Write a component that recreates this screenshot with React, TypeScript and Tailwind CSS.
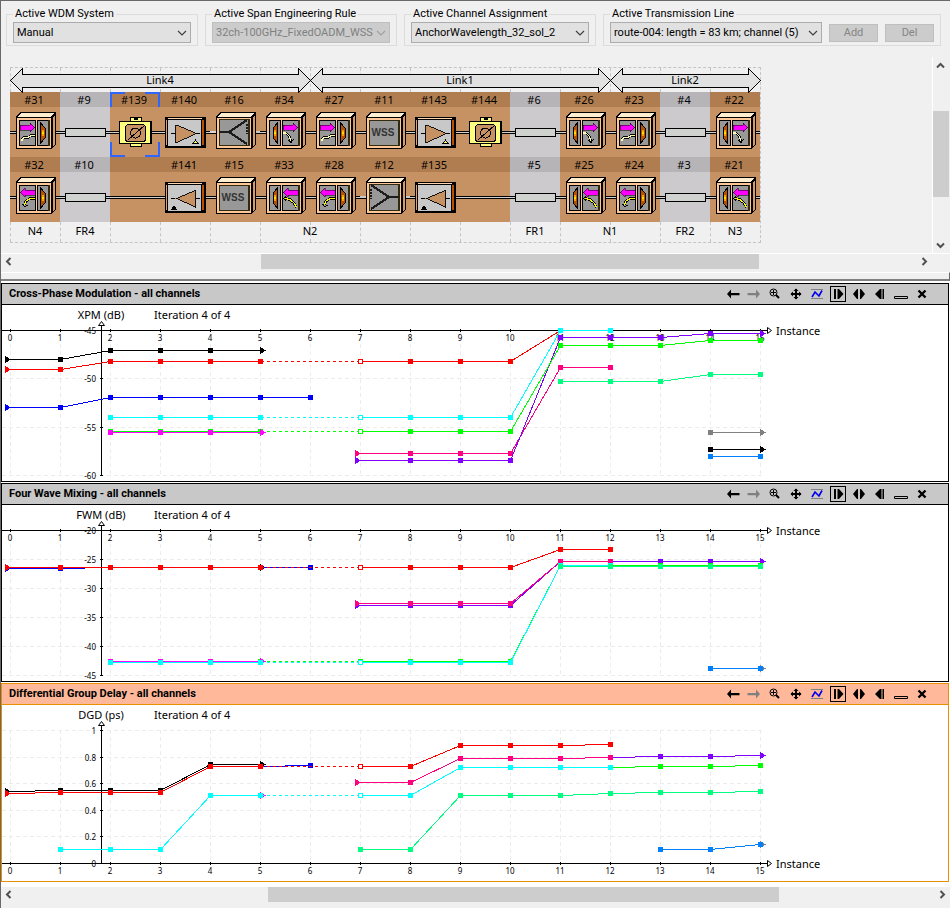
import type { ReactNode } from 'react'

type IconKind = 'coupler' | 'wss' | 'splitter' | 'amp' | 'filter' | 'fiber' | 'none'

interface NetCell {
  id?: string
  kind: IconKind
  grey?: boolean
  flip?: boolean
  side?: 'left' | 'right'
  selected?: boolean
}

interface Series {
  color: string
  start: number
  values: number[]
  startCap?: 'flag'
  endCap?: 'arrow'
  // index of the hollow marker after a dashed jump
  gap?: { from: number; to: number }
}

const topRow: NetCell[] = [
  { id: '#31', kind: 'coupler', side: 'right' },
  { id: '#9', kind: 'fiber', grey: true },
  { id: '#139', kind: 'filter', selected: true },
  { id: '#140', kind: 'amp' },
  { id: '#16', kind: 'splitter' },
  { id: '#34', kind: 'coupler', side: 'left' },
  { id: '#27', kind: 'coupler', side: 'right' },
  { id: '#11', kind: 'wss' },
  { id: '#143', kind: 'amp' },
  { id: '#144', kind: 'filter' },
  { id: '#6', kind: 'fiber', grey: true },
  { id: '#26', kind: 'coupler', side: 'left' },
  { id: '#23', kind: 'coupler', side: 'right' },
  { id: '#4', kind: 'fiber', grey: true },
  { id: '#22', kind: 'coupler', side: 'left' },
]

const bottomRow: NetCell[] = [
  { id: '#32', kind: 'coupler', side: 'right', flip: true },
  { id: '#10', kind: 'fiber', grey: true },
  { kind: 'none' },
  { id: '#141', kind: 'amp', flip: true },
  { id: '#15', kind: 'wss' },
  { id: '#33', kind: 'coupler', side: 'left', flip: true },
  { id: '#28', kind: 'coupler', side: 'right', flip: true },
  { id: '#12', kind: 'splitter', flip: true },
  { id: '#135', kind: 'amp', flip: true },
  { kind: 'none' },
  { id: '#5', kind: 'fiber', grey: true },
  { id: '#25', kind: 'coupler', side: 'left', flip: true },
  { id: '#24', kind: 'coupler', side: 'right', flip: true },
  { id: '#3', kind: 'fiber', grey: true },
  { id: '#21', kind: 'coupler', side: 'left', flip: true },
]

const links = [
  { name: 'Link4', span: 6 },
  { name: 'Link1', span: 6 },
  { name: 'Link2', span: 3 },
]

const sites = [
  { name: 'N4', span: 1 },
  { name: 'FR4', span: 1 },
  { name: 'N2', span: 8 },
  { name: 'FR1', span: 1 },
  { name: 'N1', span: 2 },
  { name: 'FR2', span: 1 },
  { name: 'N3', span: 1 },
]

/* ---------- network icons, each on a 50x50 tile ---------- */

function Box({ children }: { children: ReactNode }) {
  return (
    <g>
      <path d="M6 10 L10 5 H46 V37 L42 42 H6 Z" fill="#000" />
      <path d="M8 10 L11 6 H44 L41 10 Z" fill="#ffedd0" />
      <path d="M43 11 L45 8 V37 L43 40 Z" fill="#d99a64" />
      <rect x="6.5" y="10.5" width="35" height="31" fill="#ffc896" stroke="#000" />
      {children}
    </g>
  )
}

function Coupler({ side, flip }: { side?: 'left' | 'right'; flip?: boolean }) {
  const wideX = side === 'right' ? 9 : 22
  const narrowX = side === 'right' ? 27 : 9
  const curve =
    side === 'right'
      ? flip
        ? 'M25 26.5 H20 L16 29 L14.5 33'
        : 'M12 34 V32 L14 30.5 H18 L21 28.5 H25'
      : flip
        ? 'M25 26.5 L30 27.5 L34 31 L36.5 35'
        : 'M22.5 26 H26 L29 29 L31 34'
  const head =
    side === 'right'
      ? flip
        ? 'M12.5 32 L15 35 L17.5 33'
        : ''
      : flip
        ? 'M26 24.5 L23.5 26.5 L26 29'
        : 'M28 33 L31 35.5 L34 32'
  return (
    <Box>
      <rect x={wideX + 0.5} y="13.5" width="16" height="25" fill="#989898" stroke="#000" />
      <rect x={narrowX + 0.5} y="13.5" width="11" height="25" fill="#989898" stroke="#000" />
      <rect x="38" y="13" width="2" height="26" fill="#332b10" />
      {side === 'right' ? (
        <path d="M30.5 16 L35 21 V31 L30.5 36 Z" fill="#b85000" stroke="#000" />
      ) : (
        <path d="M17.5 16 L13 21 V31 L17.5 36 Z" fill="#b85000" stroke="#000" />
      )}
      <rect x={side === 'right' ? 32 : 14} y="23" width="2" height="6" fill="#ff9a00" />
      <rect x={side === 'right' ? 32 : 14} y="25" width="2" height="2" fill="#ffe000" />
      <path d={head} fill="none" stroke="#000" strokeWidth="1" />
      <path d={curve} fill="none" stroke="#000" strokeWidth="2.6" />
      <path d={curve} fill="none" stroke={flip ? '#ffff00' : '#ffffb0'} strokeWidth="1.2" />
      <g transform={`translate(${wideX} 0)`}>
        <path
          d={flip ? 'M16 18 H6 V16 L1 20.5 L6 25 V23 H16 Z' : 'M1 18 H11 V16 L16 20.5 L11 25 V23 H1 Z'}
          fill="#ff00ff"
          stroke="#000"
          strokeWidth="0.5"
        />
      </g>
    </Box>
  )
}

function Wss() {
  return (
    <Box>
      <rect x="9.5" y="13.5" width="30" height="25" fill="#989898" stroke="#332b10" />
      <rect x="38" y="13" width="2" height="26" fill="#332b10" />
      <text x="23" y="29" textAnchor="middle" fontSize="10" fontWeight="700" fill="#333" fontFamily="Liberation Sans, sans-serif">
        WSS
      </text>
    </Box>
  )
}

function Splitter({ flip }: { flip?: boolean }) {
  return (
    <g>
      <rect x="0" y="24" width="6" height="2" fill={flip ? '#c8c8c8' : '#d8d8d8'} />
      <rect x="44" y="24" width="6" height="2" fill="#c8c8c8" />
      <Box>
        <rect x="9.5" y="12.5" width="30" height="26" fill="#989898" stroke="#332b10" />
        <rect x="38" y="12" width="2" height="27" fill="#332b10" />
        <g transform={flip ? 'translate(48 0) scale(-1 1)' : undefined} stroke="#1c1c1c" fill="none">
          <path d="M9 25 H19 L37 13 M19 25 L37 37" strokeWidth="2" />
          <path d="M37 17 V27" strokeWidth="2" strokeDasharray="2 1" />
        </g>
      </Box>
    </g>
  )
}

function Amp({ flip }: { flip?: boolean }) {
  return (
    <g>
      <rect x="5" y="10" width="41" height="31" fill="#000" />
      <rect x="8" y="11" width="34" height="1" fill="#ffd5b0" />
      <rect x="42" y="13" width="2" height="25" fill="#b85000" />
      <rect x="6" y="13" width="1" height="25" fill="#e0a070" />
      <rect x="8" y="13" width="33" height="26" fill="#c8c8c8" />
      <path d="M11 26.5 H40" stroke="#000" />
      <path
        d={flip ? 'M35.5 18 V35.5 L15.5 26.5 Z' : 'M15.5 18 V35.5 L35.5 26.5 Z'}
        fill="#c69264"
        stroke="#000"
        strokeWidth="0.9"
      />
      {flip ? (
        <path d="M11 37.5 L14 33 L17 37.5 Z" fill="#000" />
      ) : (
        <path d="M33 36.5 L35.5 33 L38 36.5 Z" fill="#ffff60" stroke="#000" />
      )}
    </g>
  )
}

function Filter() {
  return (
    <g>
      <rect x="20.5" y="10.5" width="11" height="4" fill="#ffff80" stroke="#000" />
      <rect x="20.5" y="36.5" width="11" height="3" fill="#ffff80" stroke="#000" />
      <rect x="24" y="11" width="4" height="2" fill="#000" />
      <rect x="9" y="14" width="33" height="23" fill="#000" />
      <rect x="10" y="15" width="30" height="21" fill="#ffff80" />
      <rect x="15.5" y="17.5" width="20" height="17" rx="3" fill="#c69264" stroke="#000" />
      <circle cx="25.5" cy="26" r="5" fill="none" stroke="#000" />
      <path d="M18 33 L34 19" stroke="#000" />
    </g>
  )
}

function Fiber() {
  return <rect x="5.5" y="21.5" width="40" height="8" fill="#d0d2d0" stroke="#000" />
}

function CellIcon({ cell }: { cell: NetCell }) {
  return (
    <svg className="block size-[50px]" viewBox="0 0 50 50" shapeRendering="crispEdges">
      <rect x="0" y="24" width="50" height="3" fill="#000" />
      <rect x="0" y="25" width="50" height="1" fill="#d0d0d0" />
      {cell.kind === 'coupler' && <Coupler side={cell.side} flip={cell.flip} />}
      {cell.kind === 'wss' && <Wss />}
      {cell.kind === 'splitter' && <Splitter flip={cell.flip} />}
      {cell.kind === 'amp' && <Amp flip={cell.flip} />}
      {cell.kind === 'filter' && <Filter />}
      {cell.kind === 'fiber' && <Fiber />}
    </svg>
  )
}

function NetworkCell({ cell }: { cell: NetCell }) {
  return (
    <div className={`relative ${cell.grey ? 'bg-[#cccacd]' : 'bg-[#c69264]'}`}>
      <div
        className={`h-[15px] pr-0.5 text-center leading-[15px] ${cell.grey ? 'bg-[#b6b4b7]' : 'bg-[#b07d50]'}`}
      >
        {cell.id}
      </div>
      <CellIcon cell={cell} />
      {cell.selected && (
        <svg className="absolute inset-0 size-full" viewBox="0 0 50 65" fill="none" stroke="#2f66ff" strokeWidth="2">
          <path d="M1 15 V1 H15 M35 1 H49 V15 M49 50 V64 H35 M15 64 H1 V50" />
        </svg>
      )}
    </div>
  )
}

function LinkArrow({ name, span }: { name: string; span: number }) {
  const w = span * 50
  return (
    <svg
      className="row-start-1 block h-[25px]"
      style={{ gridColumn: `span ${span}`, width: w + 1 }}
      viewBox={`0 0 ${w + 1} 25`}
      shapeRendering="crispEdges"
    >
      <path
        d={`M0.5 12.5 L12.5 0.5 V6.5 H${w - 11.5} V0.5 L${w + 0.5} 12.5 L${w - 11.5} 24.5 V19.5 H12.5 V24.5 Z`}
        fill="#e1e1e1"
        stroke="#000"
      />
      <text x={w / 2} y="16" textAnchor="middle">
        {name}
      </text>
    </svg>
  )
}

function DashedCells({ height }: { height: string }) {
  return (
    <div className={`col-span-full col-start-1 row-start-1 grid grid-cols-[repeat(15,50px)] ${height}`}>
      {topRow.map((cell) => (
        <div key={cell.id} className="border-l border-dashed border-[#c4c4c4]" />
      ))}
    </div>
  )
}

function Network() {
  return (
    <div className="w-[751px] border-y border-r border-dashed border-[#c4c4c4]">
      <div className="grid grid-cols-[repeat(15,50px)]">
        <DashedCells height="h-6" />
        <div className="z-10 col-span-full col-start-1 row-start-1 grid h-6 grid-cols-[repeat(15,50px)]">
          {links.map((link) => (
            <LinkArrow key={link.name} {...link} />
          ))}
        </div>
      </div>
      {[topRow, bottomRow].map((row, i) => (
        <div key={i} className="grid grid-cols-[repeat(15,50px)]">
          {row.map((cell, j) => (
            <NetworkCell key={j} cell={cell} />
          ))}
        </div>
      ))}
      <div className="grid grid-cols-[repeat(15,50px)]">
        <DashedCells height="h-5" />
        <div className="col-span-full col-start-1 row-start-1 grid grid-cols-[repeat(15,50px)]">
          {sites.map((site) => (
            <span key={site.name} className="text-center leading-[18px]" style={{ gridColumn: `span ${site.span}` }}>
              {site.name}
            </span>
          ))}
        </div>
      </div>
    </div>
  )
}

/* ---------- charts ---------- */

const RED = '#ff0000'
const BLUE = '#0000ff'
const CYAN = '#00ffff'
const GREEN = '#00ff00'
const MAGENTA = '#ff00ff'
const PINK = '#ff0080'
const VIOLET = '#8000ff'
const SPRING = '#00ff80'
const AZURE = '#0080ff'
const GREY = '#808080'

const jump = { from: 5, to: 7 }
const rep = (v: number, n: number): number[] => Array(n).fill(v)

const xpm: Series[] = [
  { color: '#000', start: 0, values: [-48, -48, ...rep(-47.1, 4)], startCap: 'flag', endCap: 'arrow' },
  { color: BLUE, start: 0, values: [-53, -53, ...rep(-51.95, 5)], startCap: 'flag' },
  { color: RED, start: 0, values: [-49.05, -49.05, ...rep(-48.2, 4), NaN, ...rep(-48.2, 4), -45, -45], startCap: 'flag', gap: jump },
  { color: PINK, start: 7, values: [...rep(-57.75, 4), -48.85, -48.85], startCap: 'flag' },
  { color: VIOLET, start: 7, values: [...rep(-58.45, 4), ...rep(-45.75, 3), -45.3, -45.3], startCap: 'flag', endCap: 'arrow' },
  { color: GREEN, start: 2, values: [...rep(-55.45, 4), NaN, ...rep(-55.45, 4), ...rep(-46.55, 3), -46.05, -46.05], gap: jump },
  { color: MAGENTA, start: 2, values: rep(-55.6, 4), endCap: 'arrow' },
  { color: CYAN, start: 2, values: [...rep(-54, 4), NaN, ...rep(-54, 4), -45, -45], gap: jump },
  { color: SPRING, start: 11, values: [...rep(-50.3, 3), -49.55, -49.55] },
  { color: GREY, start: 14, values: rep(-55.6, 2), endCap: 'arrow' },
  { color: '#000', start: 14, values: rep(-57.3, 2), endCap: 'arrow' },
  { color: AZURE, start: 14, values: rep(-58.05, 2) },
]

const fwm: Series[] = [
  { color: '#000', start: 0, values: rep(-26.4, 6), startCap: 'flag', endCap: 'arrow' },
  { color: BLUE, start: 0, values: [-26.55, -26.55, ...rep(-26.4, 5)], startCap: 'flag' },
  { color: RED, start: 0, values: [...rep(-26.4, 6), NaN, ...rep(-26.4, 4), -23.3, -23.3], startCap: 'flag', gap: jump },
  { color: VIOLET, start: 7, values: [...rep(-32.9, 4), ...rep(-25.4, 5)], startCap: 'flag', endCap: 'arrow' },
  { color: PINK, start: 7, values: [...rep(-32.6, 4), -25.4, -25.4], startCap: 'flag' },
  { color: GREEN, start: 2, values: [...rep(-42.6, 4), NaN, ...rep(-42.6, 4), ...rep(-26, 5)], gap: jump },
  { color: MAGENTA, start: 2, values: rep(-42.55, 4), endCap: 'arrow' },
  { color: CYAN, start: 2, values: [...rep(-42.75, 4), NaN, ...rep(-42.75, 4), -26, -26], gap: jump },
  { color: SPRING, start: 11, values: rep(-26.2, 5) },
  { color: GREY, start: 14, values: rep(-43.8, 2), endCap: 'arrow' },
  { color: AZURE, start: 14, values: rep(-43.8, 2) },
]

const dgd: Series[] = [
  { color: '#000', start: 0, values: [0.54, ...rep(0.55, 3), 0.742, 0.742], startCap: 'flag', endCap: 'arrow' },
  { color: BLUE, start: 5, values: [0.727, 0.734] },
  { color: RED, start: 0, values: [0.527, ...rep(0.534, 3), 0.727, 0.727, NaN, 0.727, 0.727, ...rep(0.886, 3), 0.893], startCap: 'flag', gap: jump },
  { color: VIOLET, start: 7, values: [0.607, 0.607, ...rep(0.787, 3), 0.795, 0.802, 0.802, 0.81], startCap: 'flag', endCap: 'arrow' },
  { color: PINK, start: 7, values: [0.607, 0.607, ...rep(0.787, 3), 0.795], startCap: 'flag' },
  { color: GREEN, start: 12, values: [0.722, 0.728, 0.728, 0.735] },
  { color: MAGENTA, start: 4, values: [0.51, 0.51], endCap: 'arrow' },
  { color: CYAN, start: 1, values: [...rep(0.105, 3), 0.51, 0.51, NaN, 0.51, 0.51, ...rep(0.722, 4)], gap: jump },
  { color: SPRING, start: 7, values: [0.105, 0.105, ...rep(0.51, 3), 0.524, 0.532, 0.532, 0.539] },
  { color: GREY, start: 14, values: [0.105, 0.143], endCap: 'arrow' },
  { color: AZURE, start: 13, values: [0.105, 0.105, 0.143] },
]

interface ChartProps {
  unit: string
  ticks: number[]
  top: number
  bottom: number
  bottomY: number
  axisY: number
  series: Series[]
}

const px = (i: number) => 8 + i * 50

function Chart({ unit, ticks, top, bottom, bottomY, axisY, series }: ChartProps) {
  const py = (v: number) => Math.round(25 + ((top - v) / (top - bottom)) * (bottomY - 25))
  const instances = Array.from({ length: 16 }, (_, i) => i)

  return (
    <svg className="block h-[176px] w-full bg-white" shapeRendering="crispEdges">
      <g stroke="#ececec" strokeDasharray="4 3">
        {instances.map((i) => (
          <path key={i} d={`M${px(i) + 0.5} 25 V${bottomY}`} />
        ))}
        {ticks.map((t) => (
          <path key={t} d={`M0 ${py(t) + 0.5} H763`} />
        ))}
      </g>
      <g stroke="#000" fill="none">
        <path d={`M0 ${axisY + 0.5} H765`} />
        <path d={`M99.5 20 V${bottomY + 1}`} />
        {instances.map((i) => (
          <path key={i} d={`M${px(i) + 0.5} ${axisY - 1} V${axisY + 2}`} />
        ))}
        {ticks.map((t) => (
          <path key={t} d={`M98 ${py(t) + 0.5} H101`} />
        ))}
        <g fill="#fff" shapeRendering="auto">
          <path d="M96.5 20.5 L99.5 16.5 L102.5 20.5 Z" />
          <path d={`M765.5 ${axisY - 2.5} V${axisY + 3.5} L769.5 ${axisY + 0.5} Z`} />
        </g>
      </g>
      <g fontSize="8">
        {instances.map((i) => (
          <text key={i} x={px(i)} y={axisY + 11} textAnchor="middle">
            {i}
          </text>
        ))}
        {ticks.map((t) => (
          <text key={t} x="94" y={py(t) + 4} textAnchor="end">
            {t}
          </text>
        ))}
      </g>
      <text x="99" y="14" textAnchor="middle">
        {unit}
      </text>
      <text x="152" y="14">
        Iteration 4 of 4
      </text>
      <text x="774" y={axisY + 5}>
        Instance
      </text>
      {series.map((s, k) => (
        <Line key={k} series={s} py={py} />
      ))}
    </svg>
  )
}

function Line({ series, py }: { series: Series; py: (v: number) => number }) {
  const { color, start, values, startCap, endCap, gap } = series
  const points = values
    .map((v, i) => ({ i: start + i, x: px(start + i), y: Number.isNaN(v) ? NaN : py(v) }))
    .filter((p) => !Number.isNaN(p.y))
  const last = points.length - 1

  return (
    <g stroke={color} fill={color}>
      {points.slice(1).map((p, n) => {
        const prev = points[n]
        const dashed = gap !== undefined && p.i === gap.to
        return (
          <path
            key={p.i}
            d={`M${prev.x + 0.5} ${prev.y + 0.5} L${p.x + 0.5} ${p.y + 0.5}`}
            strokeDasharray={dashed ? '3 3' : undefined}
            fill="none"
          />
        )
      })}
      {points.map((p, n) => {
        if (n === 0 && startCap)
          return <path key={p.i} stroke="none" d={`M${p.x - 5} ${p.y - 3} L${p.x + 1} ${p.y + 0.5} L${p.x - 5} ${p.y + 4} Z`} />
        if (n === last && endCap)
          return <path key={p.i} stroke="none" d={`M${p.x} ${p.y - 3} L${p.x + 6} ${p.y + 0.5} L${p.x} ${p.y + 4} Z`} />
        if (gap && p.i === gap.to)
          return <rect key={p.i} x={p.x - 1.5} y={p.y - 1.5} width="4" height="4" fill="#fff" />
        return <rect key={p.i} x={p.x - 2} y={p.y - 2} width="5" height="5" stroke="none" />
      })}
    </g>
  )
}

/* ---------- chart window ---------- */

const tools: { label: string; boxed?: boolean; icon: ReactNode }[] = [
  { label: 'Back', icon: <path d="M2 8 L6 3.5 V7 H14.5 V9.2 H6 V12.5 Z" /> },
  { label: 'Forward', icon: <path fill="#808080" d="M14 8 L10 3.5 V7 H1.5 V9.2 H10 V12.5 Z" /> },
  {
    label: 'Zoom',
    icon: (
      <g fill="none" stroke="#000">
        <circle cx="6.5" cy="6.5" r="3.5" />
        <path d="M6.5 4 V9 M4 6.5 H9" />
        <path d="M9 9 L12 12" strokeWidth="2" />
      </g>
    ),
  },
  {
    label: 'Pan',
    icon: (
      <g>
        <path d="M7 3 H9 V13 H7 Z M3 7 H13 V9 H3 Z" />
        <path d="M8 2.5 L10.5 5 H5.5 Z M8 13.5 L10.5 11 H5.5 Z M2.5 8 L5 5.5 V10.5 Z M13.5 8 L11 5.5 V10.5 Z" />
      </g>
    ),
  },
  {
    label: 'Fit curves',
    icon: (
      <g fill="none">
        <path d="M2 3.5 H14 M2 12.5 H14" stroke="#808080" />
        <path d="M3 11 L6 6 L10 10 L13 4.5" stroke="#0000f0" strokeWidth="1.6" />
      </g>
    ),
  },
  { label: 'Expand right', boxed: true, icon: <path d="M4 3 H6 V13 H4 Z M7.5 3 H9 L13.5 8 L9 13 H7.5 Z" /> },
  { label: 'Expand both', icon: <path d="M2 8 L6 3 H7 V13 H6 Z M14 8 L10 3 H9 V13 H10 Z" /> },
  { label: 'Expand left', icon: <path d="M12 3 H10.5 V13 H12 Z M9.5 3 H8 L3 8 L8 13 H9.5 Z" /> },
  { label: 'Minimize', icon: <path d="M1.5 10.5 H14.5 V12.5 H1.5 Z" fill="none" stroke="#000" /> },
  { label: 'Close', icon: <path d="M4.5 4.5 L11.5 11.5 M11.5 4.5 L4.5 11.5" stroke="#000" strokeWidth="2.4" /> },
]

function ChartWindow({ title, active, children }: { title: string; active?: boolean; children: ReactNode }) {
  return (
    <section className={`border ${active ? 'border-[#e89000]' : 'border-black'}`}>
      <header
        className={`flex h-[21px] items-center justify-between border-b pr-4 pl-[7px] ${
          active ? 'border-[#e89000] bg-[#ffb899]' : 'border-black bg-[#c8c8c8]'
        }`}
      >
        <h2 className="font-['Roboto',sans-serif] font-bold">{title}</h2>
        <div className="flex">
          {tools.map((tool) => (
            <button key={tool.label} type="button" aria-label={tool.label} className="flex w-[21px] justify-center">
              <span className={`block size-4 ${tool.boxed ? 'outline outline-black -outline-offset-1' : ''}`}>
                <svg className="block size-4" viewBox="0 0 16 16">
                  {tool.icon}
                </svg>
              </span>
            </button>
          ))}
        </div>
      </header>
      {children}
    </section>
  )
}

/* ---------- scroll bars and form bits ---------- */

function Chevron({ rotate }: { rotate: string }) {
  return (
    <svg className={`size-[15px] ${rotate}`} viewBox="0 0 15 15" fill="none" stroke="#505050" strokeWidth="2">
      <path d="M4 9.5 L7.5 6 L11 9.5" />
    </svg>
  )
}

function HScroll({ before, thumb, after }: { before: number; thumb: number; after: number }) {
  return (
    <div className="flex h-[15px] items-stretch">
      <button type="button" aria-label="Scroll left">
        <Chevron rotate="-rotate-90" />
      </button>
      <div className="flex flex-1">
        <div style={{ flexGrow: before }} />
        <div className="bg-[#cdcdcd]" style={{ flexGrow: thumb }} />
        <div style={{ flexGrow: after }} />
      </div>
      <button type="button" aria-label="Scroll right">
        <Chevron rotate="rotate-90" />
      </button>
    </div>
  )
}

function Picker({ id, value, disabled, width }: { id: string; value: string; disabled?: boolean; width: string }) {
  return (
    <div className={`relative ${width}`}>
      <select
        id={id}
        disabled={disabled}
        defaultValue={value}
        className="block h-[21px] w-full appearance-none border border-[#acacac] bg-[#e1e1e1] pr-4 pl-[3px] leading-4 text-black disabled:border-[#bfbfbf] disabled:bg-[#cccccc] disabled:text-[#808080] disabled:opacity-100"
      >
        <option>{value}</option>
      </select>
      <svg
        className="pointer-events-none absolute top-1.5 right-1 h-2.5 w-2.5"
        viewBox="0 0 10 10"
        fill="none"
        stroke={disabled ? '#a0a0a0' : '#404040'}
        strokeWidth="1.2"
      >
        <path d="M1 3 L5 7 L9 3" />
      </svg>
    </div>
  )
}

function Group({ label, htmlFor, children }: { label: string; htmlFor: string; children: ReactNode }) {
  return (
    <fieldset className="border border-[#dcdcdc] px-1.5 pb-0.5">
      <legend className="px-0.5 leading-4">
        <label htmlFor={htmlFor}>{label}</label>
      </legend>
      <div className="flex items-center gap-[7px]">{children}</div>
    </fieldset>
  )
}

function PushButton({ children }: { children: ReactNode }) {
  return (
    <button type="button" disabled className="h-[18px] w-[49px] border border-[#bfbfbf] bg-[#cccccc] leading-4 text-[#858585]">
      {children}
    </button>
  )
}

export default function App() {
  return (
    <div className="min-h-screen border-t border-l border-[#696969] bg-[#f0f0f0] font-['Noto_Sans',sans-serif] text-[11px] text-black">
      <form className="flex gap-[7px] pt-[5px] pb-px pl-[5px] font-['Roboto',sans-serif] text-[11px]">
        <Group label="Active WDM System" htmlFor="wdm">
          <Picker id="wdm" value="Manual" width="w-[178px]" />
        </Group>
        <Group label="Active Span Engineering Rule" htmlFor="rule">
          <Picker id="rule" value="32ch-100GHz_FixedOADM_WSS" width="w-[178px]" disabled />
        </Group>
        <Group label="Active Channel Assignment" htmlFor="channel">
          <Picker id="channel" value="AnchorWavelength_32_sol_2" width="w-[178px]" />
        </Group>
        <Group label="Active Transmission Line" htmlFor="route">
          <Picker id="route" value="route-004: length = 83 km; channel (5)" width="w-[212px]" />
          <PushButton>Add</PushButton>
          <PushButton>Del</PushButton>
        </Group>
      </form>

      <div className="flex border-b border-white pr-px">
        <div className="min-w-0 flex-1 overflow-hidden pt-5 pb-2.5 pl-[9px]">
          <Network />
        </div>
        <div className="mt-2.5 flex w-[17px] flex-col border-l border-white">
          <button type="button" aria-label="Scroll up" className="h-4">
            <Chevron rotate="rotate-0" />
          </button>
          <div className="flex flex-1 flex-col">
            <div className="grow-[38]" />
            <div className="grow-[86] bg-[#cdcdcd]" />
            <div className="grow-[40]" />
          </div>
          <button type="button" aria-label="Scroll down" className="h-4">
            <Chevron rotate="rotate-180" />
          </button>
        </div>
      </div>
      <div className="pr-[18px]">
        <HScroll before={245} thumb={497} after={158} />
      </div>

      <div className="mt-[3px] h-[9px] border-t border-r border-b-2 border-t-white border-r-[#696969] border-b-[#808080]" />

      <main className="flex flex-col gap-px bg-white pt-0.5 pr-px pb-[5px]">
        <ChartWindow title="Cross-Phase Modulation - all channels">
          <Chart unit="XPM (dB)" ticks={[-45, -50, -55, -60]} top={-45} bottom={-60} bottomY={170} axisY={25} series={xpm} />
        </ChartWindow>
        <ChartWindow title="Four Wave Mixing - all channels">
          <Chart
            unit="FWM (dB)"
            ticks={[-20, -25, -30, -35, -40, -45]}
            top={-20}
            bottom={-45}
            bottomY={170}
            axisY={25}
            series={fwm}
          />
        </ChartWindow>
        <ChartWindow title="Differential Group Delay - all channels" active>
          <Chart
            unit="DGD (ps)"
            ticks={[1, 0.8, 0.6, 0.4, 0.2, 0]}
            top={1}
            bottom={0}
            bottomY={158}
            axisY={158}
            series={dgd}
          />
        </ChartWindow>
      </main>

      <HScroll before={252} thumb={510} after={156} />
    </div>
  )
}
